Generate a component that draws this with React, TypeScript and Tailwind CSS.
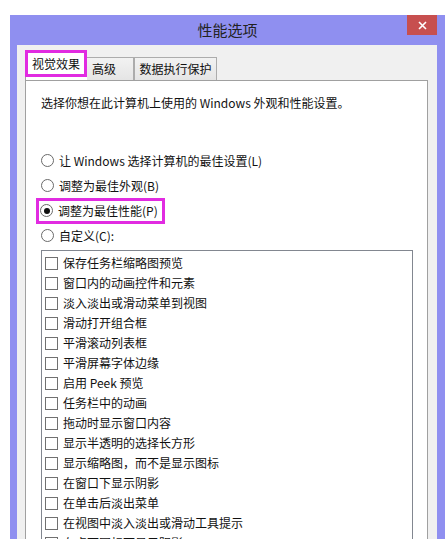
import React from 'react';

const items = [
  '保存任务栏缩略图预览',
  '窗口内的动画控件和元素',
  '淡入淡出或滑动菜单到视图',
  '滑动打开组合框',
  '平滑滚动列表框',
  '平滑屏幕字体边缘',
  '启用 Peek 预览',
  '任务栏中的动画',
  '拖动时显示窗口内容',
  '显示半透明的选择长方形',
  '显示缩略图，而不是显示图标',
  '在窗口下显示阴影',
  '在单击后淡出菜单',
  '在视图中淡入淡出或滑动工具提示',
  '在桌面图标下显示阴影',
];

const Radio: React.FC<{ checked?: boolean }> = ({ checked }) => (
  <span className="w-[13px] h-[13px] rounded-full border border-[#6a6a6a] bg-white flex items-center justify-center shrink-0">
    {checked && <span className="w-[6px] h-[6px] rounded-full bg-[#111]" />}
  </span>
);

const App: React.FC = () => {
  return (
    <div className="w-[447px] h-[539px] bg-white overflow-hidden text-[12px] leading-[16px] text-[#111] font-['Noto_Sans_CJK_SC',sans-serif]">
      {/* window frame */}
      <div className="ml-[10px] mt-[15px] w-[435px] h-[540px] bg-[#8f8ff0] flex flex-col">
        {/* title bar */}
        <div className="h-[30px] grid grid-cols-[1fr_auto_1fr] shrink-0">
          <div />
          <div className="self-center text-[15px] leading-[20px] text-[#222]">性能选项</div>
          <div className="flex justify-end pr-[8px]">
            <div className="w-[30px] h-[20px] bg-[#c74f4f] flex items-center justify-center">
              <svg width="9" height="9" viewBox="0 0 9 9">
                <path d="M1 1L8 8M8 1L1 8" stroke="#fff" strokeWidth="1.6" />
              </svg>
            </div>
          </div>
        </div>

        {/* client area */}
        <div className="ml-[7px] mr-[8px] flex-1 bg-[#f0f0f0] pt-[5px] pl-[8px] pr-[9px]">
          {/* tabs */}
          <div className="flex items-end h-[30px]">
            <div className="w-[62px] h-[30px] flex flex-col bg-white">
              <div className="h-[27px] border-[3px] border-[#e12be1] flex items-center justify-center">
                视觉效果
              </div>
              <div className="flex-1 border-l border-[#a0a0a0]" />
            </div>
            <div className="w-[47px] h-[23px] border border-b-0 border-l-0 border-[#acacac] bg-gradient-to-b from-[#f2f2f2] to-[#e5e5e5] flex items-center pl-[5px]">
              高级
            </div>
            <div className="w-[83px] h-[23px] border border-b-0 border-[#acacac] bg-gradient-to-b from-[#f2f2f2] to-[#e5e5e5] flex items-center justify-center">
              数据执行保护
            </div>
          </div>

          {/* tab panel */}
          <div className="h-[470px] bg-white border border-[#a0a0a0] pl-[15px] pt-[14px]">
            <p>选择你想在此计算机上使用的 Windows 外观和性能设置。</p>

            <div className="mt-[37px] flex flex-col">
              <div className="h-[25px] flex items-center gap-[5px]">
                <Radio />
                <span>让 Windows 选择计算机的最佳设置(L)</span>
              </div>
              <div className="h-[25px] flex items-center gap-[5px]">
                <Radio />
                <span>调整为最佳外观(B)</span>
              </div>
              <div className="h-[25px] flex items-center">
                <div className="-ml-[5px] h-[26px] border-[3px] border-[#e12be1] pl-[1px] pr-[4px] flex items-center gap-[5px]">
                  <Radio checked />
                  <span>调整为最佳性能(P)</span>
                </div>
              </div>
              <div className="h-[25px] flex items-center gap-[5px]">
                <Radio />
                <span>自定义(C):</span>
              </div>
            </div>

            {/* list of options */}
            <div className="mt-[2px] w-[372px] h-[300px] border border-[#828790] bg-white pt-[2px] pl-[3px]">
              {items.map((t) => (
                <div key={t} className="h-[20px] flex items-center gap-[5px]">
                  <span className="w-[13px] h-[13px] border border-[#707070] bg-white shrink-0" />
                  <span>{t}</span>
                </div>
              ))}
            </div>
          </div>
        </div>
      </div>
    </div>
  );
};

export default App;
